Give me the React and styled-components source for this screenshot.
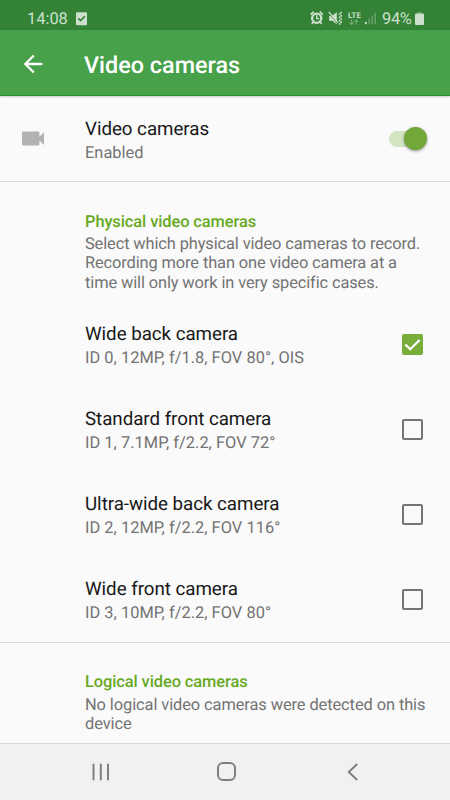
import React from 'react';
import styled, { createGlobalStyle } from 'styled-components';

const GlobalStyle = createGlobalStyle`
  * { box-sizing: border-box; }
  body { margin: 0; background: #fafafa; font-family: Roboto, "Liberation Sans", sans-serif; text-rendering: geometricPrecision; }
`;

const Screen = styled.div`
  width: 450px;
  height: 800px;
  display: flex;
  flex-direction: column;
  overflow: hidden;
  background: #fafafa;
`;

const StatusBar = styled.header`
  height: 30px;
  flex: none;
  display: flex;
  align-items: center;
  padding: 7px 26px 0 27px;
  background: #338236;
  color: #cce0cd;
  font-size: 16.4px;
  line-height: 22px;
`;

const Clock = styled.span`
  width: 49px;
  padding-top: 2px;
`;

const StatusIcons = styled.div`
  margin-left: auto;
  display: flex;
  align-items: center;
`;

const Battery = styled.span`
  width: 33px;
  margin-left: 3px;
  padding-top: 2px;
  letter-spacing: -0.3px;
`;

const AppBar = styled.div`
  height: 66px;
  flex: none;
  display: flex;
  align-items: center;
  padding-left: 19px;
  padding-top: 2px;
  background: #46a14a;
  border-bottom: 1px solid #259329;
  box-shadow: 0 1px 2px rgba(0, 0, 0, 0.2);
  z-index: 1;
`;

const Title = styled.h1`
  margin: 0 0 0 37px;
  padding-top: 2px;
  color: #fff;
  font-size: 23.4px;
  line-height: 28px;
  font-weight: 500;
`;

const Content = styled.main`
  flex: 1;
  min-height: 0;
  overflow: hidden;
`;

const Row = styled.div`
  height: 85px;
  display: flex;
  align-items: center;
  padding: 0 27px 0 22px;
`;

const IconSlot = styled.div`
  width: 63px;
  flex: none;
  display: flex;
`;

const RowText = styled.div`
  flex: 1;
  padding-top: ${(p) => p.$drop || '4px'};
`;

const RowTitle = styled.div`
  font-size: 18.75px;
  line-height: 24px;
  letter-spacing: -0.04px;
  color: #181818;
`;

const Summary = styled.div`
  font-size: 16.4px;
  line-height: 25px;
  letter-spacing: 0.03px;
  color: #737373;
`;

const Description = styled.p`
  margin: 0;
  font-size: 16.4px;
  line-height: 19.3px;
  letter-spacing: ${(p) => p.$tracking};
  color: #737373;
`;

const Section = styled.section`
  border-top: 1px solid #dadada;
`;

const SectionHead = styled.div`
  height: ${(p) => p.$height};
  padding: ${(p) => p.$top} 20px 0 85px;
`;

const SectionTitle = styled.h2`
  margin: 0 0 2.5px;
  font-size: 16.4px;
  line-height: 20px;
  font-weight: 500;
  letter-spacing: -0.08px;
  color: #67a91e;
`;

const SwitchTrack = styled.div`
  width: 30px;
  height: 16px;
  display: flex;
  align-items: center;
  background: #d3e5c3;
  border-radius: 8px;
  margin-right: 4px;
`;

const SwitchThumb = styled.div`
  width: 23px;
  height: 23px;
  flex: none;
  margin-left: 15px;
  border-radius: 50%;
  background: #72a839;
  box-shadow: 0 1px 3px rgba(0, 0, 0, 0.42);
`;

const Box = styled.div`
  width: 21px;
  height: 21px;
  border-radius: 2px;
  border: 2px solid ${(p) => (p.$checked ? '#78ad3b' : '#757575')};
  background: ${(p) => (p.$checked ? '#78ad3b' : 'transparent')};
  display: flex;
  align-items: center;
  justify-content: center;
`;

const NavBar = styled.nav`
  height: 57px;
  flex: none;
  display: flex;
  justify-content: space-between;
  align-items: center;
  padding: 0 91px;
  background: #f1f1f1;
  border-top: 1px solid #dadada;
`;

const cameras = [
  { name: 'Wide back camera', detail: 'ID 0, 12MP, f/1.8, FOV 80°, OIS', checked: true },
  { name: 'Standard front camera', detail: 'ID 1, 7.1MP, f/2.2, FOV 72°' },
  { name: 'Ultra-wide back camera', detail: 'ID 2, 12MP, f/2.2, FOV 116°' },
  { name: 'Wide front camera', detail: 'ID 3, 10MP, f/2.2, FOV 80°' },
];

const TaskIcon = () => (
  <svg width="11" height="14" viewBox="0 0 11 14">
    <rect y="0.3" width="11" height="13" rx="1" fill="#cce0cd" />
    <path d="M2.3 6.3 4.7 8.6 8.8 4.3" fill="none" stroke="#338236" strokeWidth="1.6" />
  </svg>
);

const SignalIcons = () => (
  <svg width="69" height="18" viewBox="0 0 69 18" fill="none" stroke="#cce0cd">
    <circle cx="6.7" cy="8.3" r="4.6" strokeWidth="2.3" />
    <path d="M.6 4.6 3.6 1.7M12.8 4.6 9.8 1.7M3.2 12 1.8 14M10.2 12l1.4 2" strokeWidth="1.7" />
    <path d="M6.7 5.3v3.3h2.5" strokeWidth="1.4" />
    <path d="M19.2 5.8h3.2L26.8 2v12.2L22.4 10.8h-3.2z" fill="#cce0cd" stroke="none" />
    <path d="M18.5 3.2 27.8 13.6" stroke="#338236" strokeWidth="0.9" />
    <path d="M18.8 2 28 12.4" strokeWidth="1.2" />
    <path d="M28.8 4.2h1.6M28.8 7.4h1.6M28.8 10.6h1.6M30.4 2.6H32M30.4 5.8H32M30.4 9H32M30.4 12.2H32M28.8 13.8h1.6" strokeWidth="1.7" />
    <text x="38" y="7.6" fill="#cce0cd" stroke="none" fontFamily="Roboto, sans-serif" fontSize="7.8" fontWeight="700" textLength="13">LTE</text>
    <path d="M41.7 9.6v4.8M39.7 12.6l2 1.9 2-1.9M46.3 14.8v-4.8M44.3 11.8l2-1.9 2 1.9" stroke="#78ad7a" strokeWidth="1.1" />
    <path d="M55.8 11.8V14.2" strokeWidth="1.8" />
    <path d="M59.2 8.6V14.2M62.2 5.8V14.2M65.2 2.8V14.2" stroke="#66a169" strokeWidth="1.6" />
  </svg>
);

const BatteryIcon = () => (
  <svg width="9" height="14" viewBox="0 0 9 14" fill="#cce0cd">
    <rect x="2.5" width="4" height="2" fill="#66a169" />
    <rect y="1.5" width="9" height="11.5" rx="1" />
  </svg>
);

const BackArrow = () => (
  <svg width="28" height="28" viewBox="0 0 24 24" fill="#fff">
    <path d="M20 11H7.83l5.59-5.59L12 4l-8 8 8 8 1.41-1.41L7.83 13H20z" />
  </svg>
);

const VideoIcon = () => (
  <svg width="22" height="15" viewBox="0 0 22 15" fill="#b2b2b2">
    <path d="M1.2 0.5H16.2Q17.4 .5 17.4 1.7V5.7L22 1.3V14L17.4 9.6V13.3Q17.4 14.5 16.2 14.5H1.2Q0 14.5 0 13.3V1.7Q0 .5 1.2 .5Z" />
  </svg>
);

const CheckBox = ({ checked }) => (
  <Box $checked={checked} role="checkbox" aria-checked={!!checked}>
    {checked && (
      <svg width="17" height="17" viewBox="0 0 17 17" fill="none">
        <path d="M1.3 8.5 6.2 13.2 15.6 4" stroke="#fff" strokeWidth="2.2" />
      </svg>
    )}
  </Box>
);

const RecentsIcon = () => (
  <svg width="20" height="18" viewBox="0 0 20 18" stroke="#808080" strokeWidth="2" strokeLinecap="round">
    <path d="M2.5 1.5v15M9.8 1.5v15M17 1.5v15" />
  </svg>
);

const HomeIcon = () => (
  <svg width="20" height="20" viewBox="0 0 20 20" fill="none" stroke="#808080" strokeWidth="2">
    <rect x="1" y="1" width="17" height="17" rx="5" />
  </svg>
);

const NavBack = () => (
  <svg width="16" height="18" viewBox="0 0 16 18" fill="none" stroke="#808080" strokeWidth="2">
    <path d="M14.2 1 5.8 9l8.4 8" />
  </svg>
);

export default function App() {
  return (
    <Screen>
      <GlobalStyle />
      <StatusBar>
        <Clock>14:08</Clock>
        <TaskIcon />
        <StatusIcons>
          <SignalIcons />
          <Battery>94%</Battery>
          <BatteryIcon />
        </StatusIcons>
      </StatusBar>
      <AppBar>
        <BackArrow />
        <Title>Video cameras</Title>
      </AppBar>
      <Content>
        <Row>
          <IconSlot><VideoIcon /></IconSlot>
          <RowText $drop="6px">
            <RowTitle>Video cameras</RowTitle>
            <Summary>Enabled</Summary>
          </RowText>
          <SwitchTrack role="switch" aria-checked="true"><SwitchThumb /></SwitchTrack>
        </Row>
        <Section>
          <SectionHead $height="120px" $top="30.7px">
            <SectionTitle>Physical video cameras</SectionTitle>
            <Description $tracking="-0.11px">
              Select which physical video cameras to record.<br />
              Recording more than one video camera at a<br />
              time will only work in very specific cases.
            </Description>
          </SectionHead>
          {cameras.map((camera) => (
            <Row key={camera.name}>
              <IconSlot />
              <RowText>
                <RowTitle>{camera.name}</RowTitle>
                <Summary>{camera.detail}</Summary>
              </RowText>
              <CheckBox checked={camera.checked} />
            </Row>
          ))}
        </Section>
        <Section>
          <SectionHead $height="100px" $top="30px">
            <SectionTitle>Logical video cameras</SectionTitle>
            <Description $tracking="-0.08px">
              No logical video cameras were detected on this<br />
              device
            </Description>
          </SectionHead>
        </Section>
      </Content>
      <NavBar>
        <RecentsIcon />
        <HomeIcon />
        <NavBack />
      </NavBar>
    </Screen>
  );
}
